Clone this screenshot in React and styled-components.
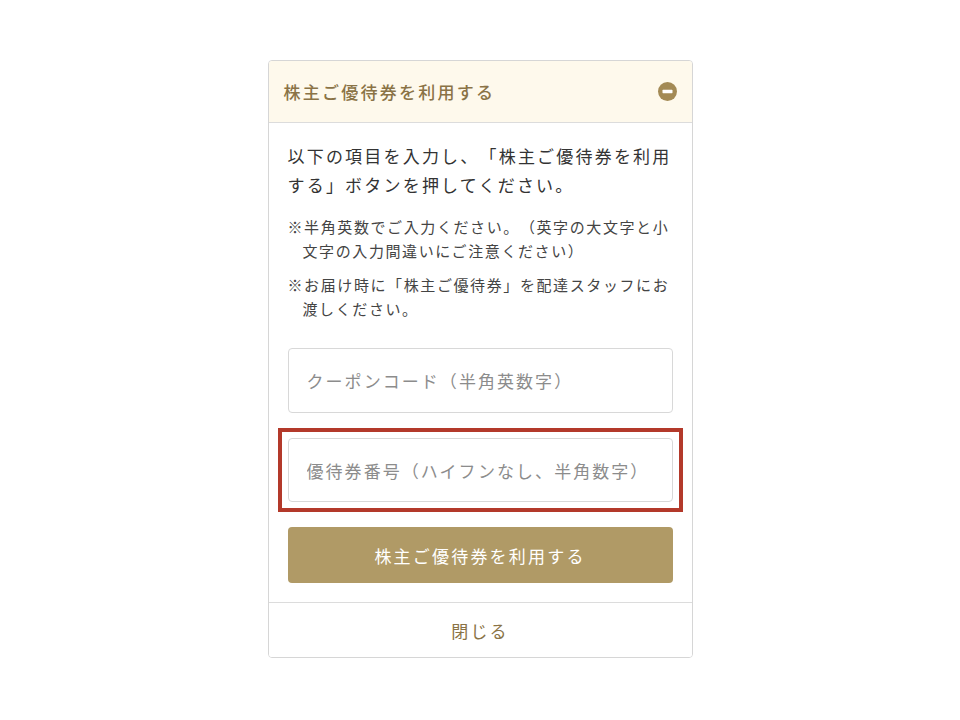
import React from 'react';
import styled, { createGlobalStyle } from 'styled-components';

const GlobalStyle = createGlobalStyle`
  html, body {
    margin: 0;
    padding: 0;
    background: #ffffff;
  }
  body {
    font-family: "Noto Sans CJK JP", "Noto Sans", sans-serif;
    color: #333333;
    text-spacing-trim: space-all;
  }
`;

const Page = styled.div`
  display: flex;
  justify-content: center;
  padding-top: 60px;
`;

const Card = styled.section`
  width: 425px;
  box-sizing: border-box;
  border: 1px solid #d6d6d6;
  border-radius: 4px;
  background: #fff;
  overflow: hidden;
`;

const Header = styled.div`
  display: flex;
  align-items: center;
  justify-content: space-between;
  height: 61px;
  padding: 0 15px;
  background: #fef9ec;
  border-bottom: 1px solid #dcdcdc;
`;

const HeaderTitle = styled.h2`
  margin: 0;
  font-size: 17px;
  font-weight: 500;
  letter-spacing: 2.25px;
  color: #8a7346;
`;

const Body = styled.div`
  padding: 18px 19px 19px;
  border-bottom: 1px solid #dcdcdc;
`;

const Lead = styled.p`
  margin: 0 0 16px;
  font-size: 17px;
  line-height: 29px;
  letter-spacing: 2.2px;
  color: #333;
`;

const Note = styled.p`
  margin: 0 0 10px;
  padding-left: 1em;
  text-indent: -1em;
  font-size: 15px;
  line-height: 24px;
  letter-spacing: 1.6px;
  color: #444;
`;

const Fields = styled.div`
  display: flex;
  flex-direction: column;
  gap: 25px;
  margin-top: 27px;
`;

const Highlight = styled.div`
  position: relative;
  &::after {
    content: "";
    position: absolute;
    inset: -10px;
    border: 4px solid #b3392a;
    pointer-events: none;
  }
`;

const Field = styled.input`
  display: block;
  box-sizing: border-box;
  width: 100%;
  height: ${p => p.$h || 64}px;
  padding: 0 18px;
  border: 1px solid #d8d8d8;
  border-radius: 4px;
  font-family: inherit;
  font-size: 17px;
  letter-spacing: 2.05px;
  color: #333;
  outline: none;
  &::placeholder {
    color: #8c8c8c;
  }
`;

const Submit = styled.button`
  height: 56px;
  border: none;
  border-radius: 4px;
  background: #b09a66;
  color: #fff;
  font-family: inherit;
  font-size: 17px;
  letter-spacing: 2.2px;
  cursor: pointer;
`;

const Close = styled.button`
  display: block;
  width: 100%;
  height: 54px;
  border: none;
  background: #fff;
  color: #8a7346;
  font-family: inherit;
  font-size: 17px;
  letter-spacing: 2.2px;
  cursor: pointer;
`;

const MinusIcon = () => (
  <svg width="19" height="19" viewBox="0 0 19 19" aria-hidden="true">
    <circle cx="9.5" cy="9.5" r="9.5" fill="#a38a55" />
    <rect x="4.5" y="7.8" width="10" height="3.4" rx="0.6" fill="#fff" />
  </svg>
);

export default function App() {
  return (
    <>
      <GlobalStyle />
      <Page>
        <Card>
          <Header>
            <HeaderTitle>株主ご優待券を利用する</HeaderTitle>
            <MinusIcon />
          </Header>
          <Body>
            <Lead>以下の項目を入力し、「株主ご優待券を利用する」ボタンを押してください。</Lead>
            <Note>※半角英数でご入力ください。（英字の大文字と小文字の入力間違いにご注意ください）</Note>
            <Note>※お届け時に「株主ご優待券」を配達スタッフにお渡しください。</Note>
            <Fields>
              <Field $h={65} placeholder="クーポンコード（半角英数字）" />
              <Highlight>
                <Field placeholder="優待券番号（ハイフンなし、半角数字）" />
              </Highlight>
              <Submit type="button">株主ご優待券を利用する</Submit>
            </Fields>
          </Body>
          <Close type="button">閉じる</Close>
        </Card>
      </Page>
    </>
  );
}
